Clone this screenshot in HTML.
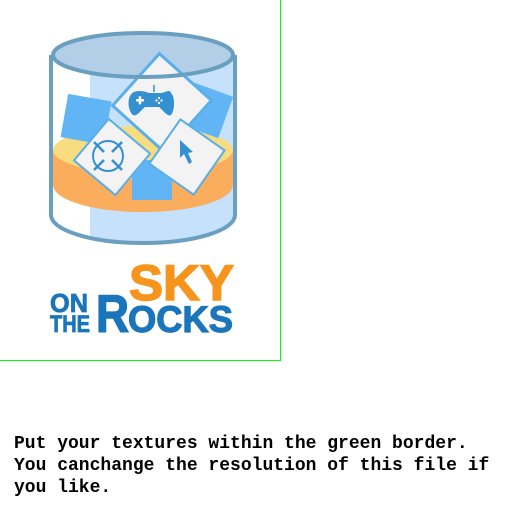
<!DOCTYPE html>
<html><head><style>
body{margin:0;width:512px;height:512px;background:#fff;position:relative;overflow:hidden;font-family:"Liberation Sans",sans-serif}
.box{position:absolute;left:-2px;top:-2px;width:283px;height:363px;border:1px solid #00ff00;box-sizing:border-box;z-index:5}
.t{position:absolute;left:14px;top:433px;font:bold 18px/22px "Liberation Mono",monospace;color:#000;white-space:pre;letter-spacing:0px}
</style></head><body>
<svg width="512" height="360" style="position:absolute;left:0;top:0">
<defs><clipPath id="g"><path d="M51 55 L51 215 A92 28 0 0 0 235 215 L235 55 Z"/></clipPath></defs>
<g clip-path="url(#g)">
<rect x="51" y="40" width="184" height="210" fill="#fff"/>
<rect x="90" y="40" width="145" height="210" fill="#c5e1fb"/>
<path d="M53 150 L53 185 A90 27 0 0 0 233 185 L233 150 Z" fill="#f9ad5d"/>
<ellipse cx="143" cy="150" rx="90" ry="24" fill="#f8dc80"/>
</g>
<ellipse cx="143" cy="55" rx="90" ry="22" fill="#b3cfe8"/>
<g transform="rotate(10 90 120)"><rect x="64" y="98" width="44" height="44" fill="#62b5f4"/></g>
<g transform="rotate(20 205 110)"><rect x="183" y="88" width="44" height="44" fill="#62b5f4"/></g>
<rect x="132" y="160" width="40" height="40" fill="#62b5f4"/>
<g transform="rotate(42 162 103)"><rect x="127" y="68" width="70" height="70" fill="#f3f3f3" stroke="#5aaeea" stroke-width="3"/></g>
<g transform="rotate(40 112 157)"><rect x="85" y="130" width="54" height="54" fill="#f3f3f3" stroke="#5aaeea" stroke-width="2"/></g>
<g transform="rotate(35 187 157)"><rect x="160" y="130" width="54" height="54" fill="#f3f3f3" stroke="#5aaeea" stroke-width="2"/></g>
<path d="M127 96 C130 90 138 90 146 93 L159 93 C168 90 166 90 170 96 C172 102 171 112 168 115 C164 117 160 110 156 107 L142 107 C138 110 134 117 130 115 C126 112 124 102 127 96 Z" fill="#3490d0" transform="translate(3 0)"/>
<line x1="151" y1="85" x2="151" y2="92" stroke="#3490d0" stroke-width="1.5" transform="translate(3 0)"/>
<rect x="133" y="99" width="8" height="2.5" fill="#fff" transform="translate(3 0)"/>
<rect x="135.7" y="96.3" width="2.5" height="8" fill="#fff" transform="translate(3 0)"/>
<g fill="#fff" transform="translate(3 0)"><circle cx="156" cy="98" r="1.1"/><circle cx="156" cy="103" r="1.1"/><circle cx="153.5" cy="100.5" r="1.1"/><circle cx="158.5" cy="100.5" r="1.1"/></g>
<circle cx="108" cy="156" r="15" fill="none" stroke="#3490d0" stroke-width="2"/>
<path d="M94 142 L104 152 M112 160 L122 170 M122 142 L112 152 M104 160 L94 170" stroke="#3490d0" stroke-width="2.5"/>
<path d="M180 140 L180 158 L184 154 L189 164 L192 162 L188 153 L193 152 Z" fill="#3490d0"/>
<ellipse cx="143" cy="55" rx="90" ry="22" fill="none" stroke="#6a9fc0" stroke-width="4"/>
<path d="M51 55 L51 215 A92 28 0 0 0 235 215 L235 55" fill="none" stroke="#6a9fc0" stroke-width="4"/>
<text x="129" y="300" font-family="Liberation Sans" font-weight="bold" font-size="50" fill="#f7941d" stroke="#f7941d" stroke-width="1.5" textLength="105" lengthAdjust="spacingAndGlyphs">SKY</text>
<text x="96" y="332" font-family="Liberation Sans" font-weight="bold" font-size="53" fill="#1a75bb" stroke="#1a75bb" stroke-width="1.5" textLength="33" lengthAdjust="spacingAndGlyphs">R</text>
<text x="128" y="332" font-family="Liberation Sans" font-weight="bold" font-size="37" fill="#1a75bb" stroke="#1a75bb" stroke-width="1.2" textLength="105" lengthAdjust="spacingAndGlyphs">OCKS</text>
<text x="50" y="312" font-family="Liberation Sans" font-weight="bold" font-size="26" fill="#1a75bb" stroke="#1a75bb" stroke-width="0.8" textLength="38" lengthAdjust="spacingAndGlyphs">ON</text>
<text x="50" y="332" font-family="Liberation Sans" font-weight="bold" font-size="24" fill="#1a75bb" stroke="#1a75bb" stroke-width="0.8" textLength="40" lengthAdjust="spacingAndGlyphs">THE</text>
</svg>
<div class="box"></div>
<div class="t">Put your textures within the green border.
You canchange the resolution of this file if
you like.</div>
</body></html>
